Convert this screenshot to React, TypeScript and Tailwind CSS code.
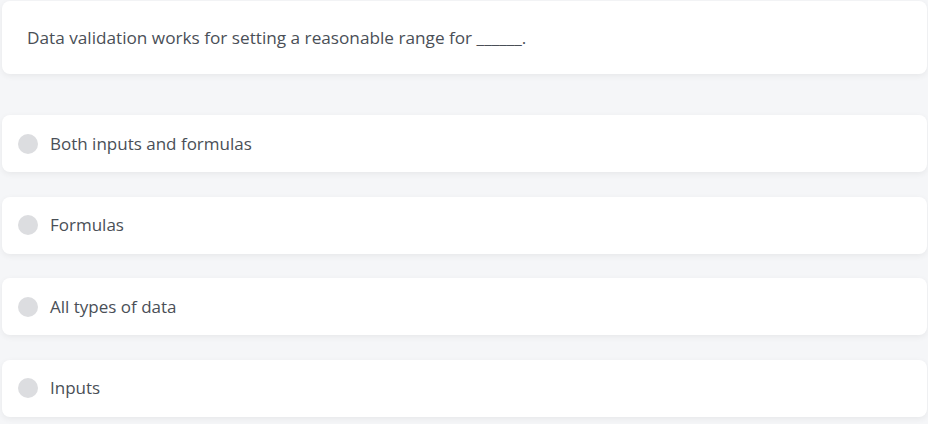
const OPTIONS = ['Both inputs and formulas', 'Formulas', 'All types of data', 'Inputs'];

export default function App() {
  return (
    <div
      className="w-[928px] h-[424px] bg-[#f5f6f8] overflow-hidden pl-[2px] pr-[1px] pt-[1px]"
      style={{ fontFamily: '"Open Sans", "Liberation Sans", sans-serif' }}
    >
      {/* Question */}
      <div className="h-[73px] bg-white rounded-lg shadow-[0_2px_6px_rgba(0,0,0,0.06)] flex items-center pl-[25px] text-[17.2px] text-[#4a4f57]">
        Data validation works for setting a reasonable range for ______.
      </div>

      {/* Options */}
      <div className="mt-[41px] flex flex-col gap-[24.5px]">
        {OPTIONS.map((opt) => (
          <div
            key={opt}
            className="h-[57px] bg-white rounded-lg shadow-[0_2px_6px_rgba(0,0,0,0.06)] flex items-center pl-[16px] gap-[12px] text-[17px] text-[#4a4f57]"
          >
            <span className="w-[20px] h-[20px] rounded-full bg-[#dcdde0]" />
            <span>{opt}</span>
          </div>
        ))}
      </div>
    </div>
  );
}
